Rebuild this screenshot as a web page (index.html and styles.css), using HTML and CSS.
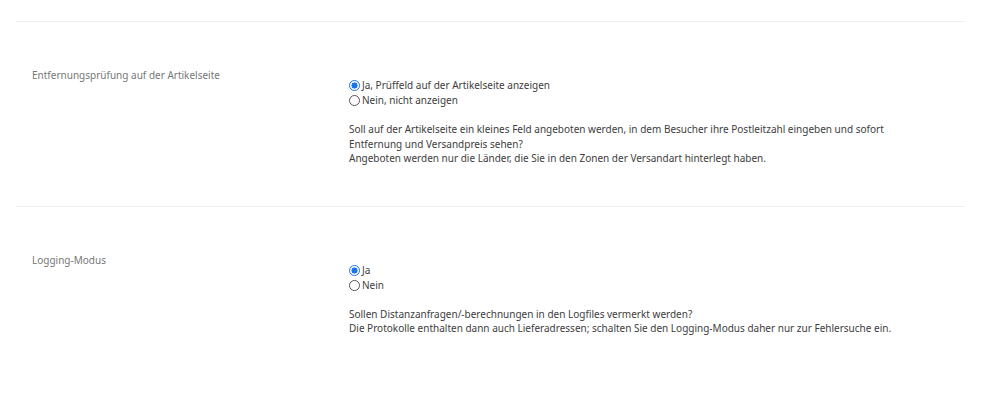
FILE: index.html
```html
<!DOCTYPE html>
<html lang="de">
<head>
<meta charset="utf-8">
<link rel="stylesheet" href="styles.css">
</head>
<body>
<div class="page">
  <section class="row">
    <div class="label">Entfernungsprüfung auf der Artikelseite</div>
    <div class="field">
      <label class="opt"><span class="radio checked"></span>Ja, Prüffeld auf der Artikelseite anzeigen</label>
      <label class="opt"><span class="radio"></span>Nein, nicht anzeigen</label>
      <p class="desc">Soll auf der Artikelseite ein kleines Feld angeboten werden, in dem Besucher ihre Postleitzahl eingeben und sofort<br>Entfernung und Versandpreis sehen?<br>Angeboten werden nur die Länder, die Sie in den Zonen der Versandart hinterlegt haben.</p>
    </div>
  </section>
  <section class="row">
    <div class="label">Logging-Modus</div>
    <div class="field">
      <label class="opt"><span class="radio checked"></span>Ja</label>
      <label class="opt"><span class="radio"></span>Nein</label>
      <p class="desc">Sollen Distanzanfragen/-berechnungen in den Logfiles vermerkt werden?<br>Die Protokolle enthalten dann auch Lieferadressen; schalten Sie den Logging-Modus daher nur zur Fehlersuche ein.</p>
    </div>
  </section>
</div>
</body>
</html>
```
FILE: styles.css
```css
html, body {
  margin: 0;
  padding: 0;
  background: #ffffff;
}
body {
  font-family: "Noto Sans", "Open Sans", sans-serif;
  font-size: 10px;
  color: #3d3d3d;
}
.page {
  padding: 21px 35px 0 16px;
}
.row {
  border-top: 1px solid #f0f0f0;
  display: grid;
  grid-template-columns: 317px 1fr;
  padding: 46px 0 40px 16px;
}
.label {
  color: #777777;
  line-height: 15px;
}
.field {
  padding-top: 10px;
}
.opt {
  display: flex;
  align-items: center;
  height: 15px;
  line-height: 15px;
}
.radio {
  box-sizing: border-box;
  width: 11px;
  height: 11px;
  border-radius: 50%;
  border: 1px solid #555;
  margin-right: 2px;
  background: #fff;
  flex: none;
}
.radio.checked {
  border: 1.5px solid #1a73e8;
  background: radial-gradient(circle, #1a73e8 0 2.8px, #fff 3.3px);
}
.desc {
  margin: 14px 0 0;
  line-height: 14.5px;
}
```
